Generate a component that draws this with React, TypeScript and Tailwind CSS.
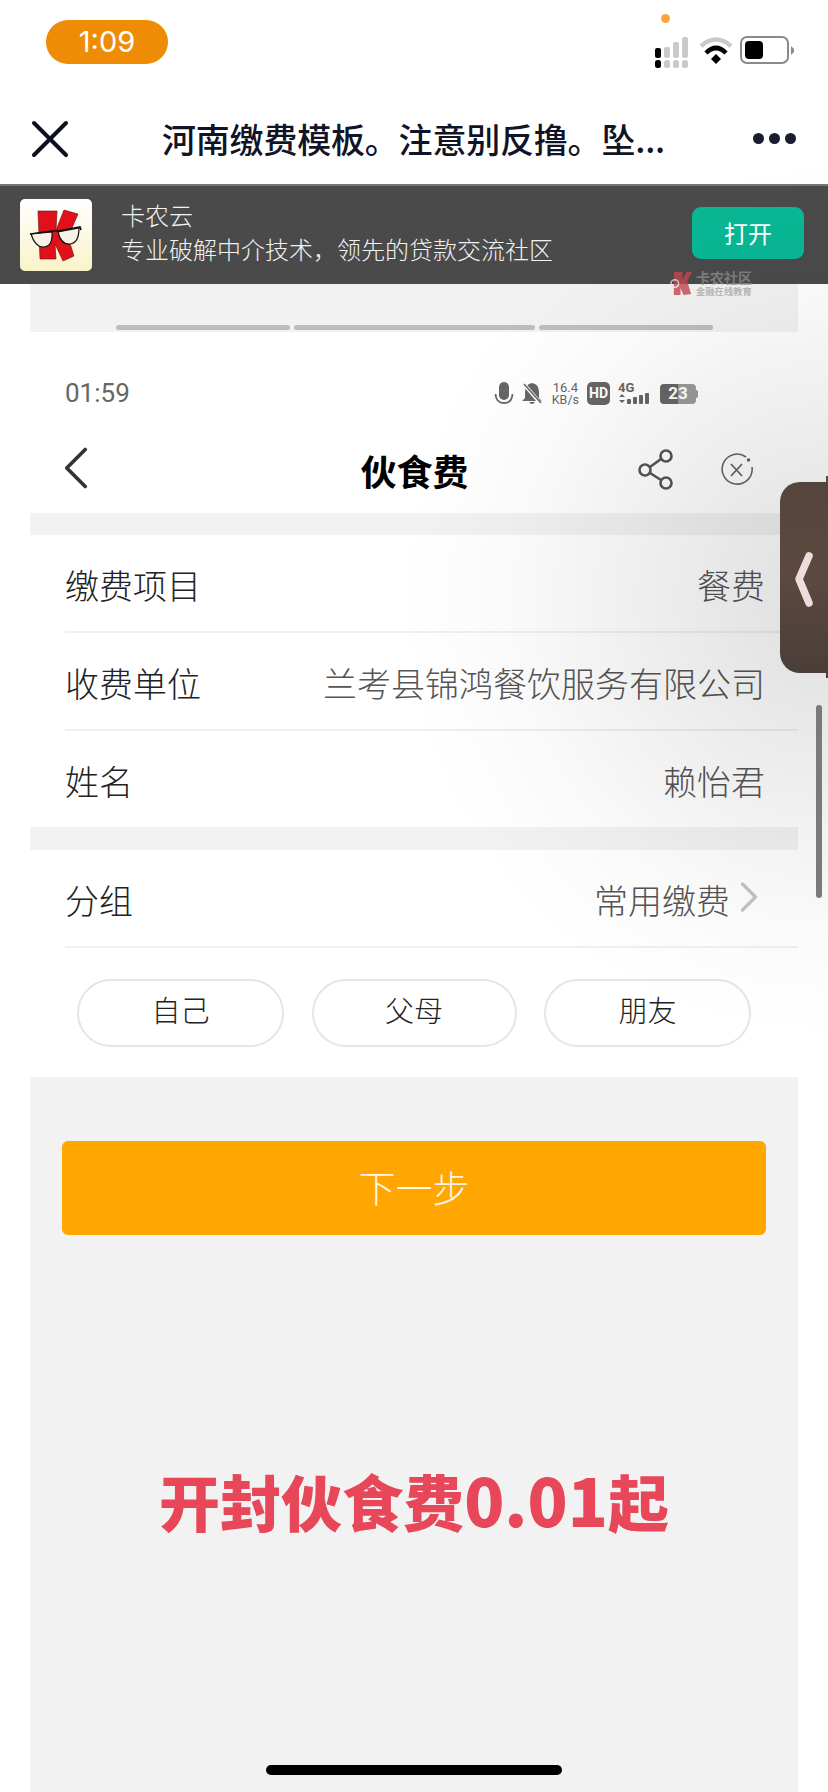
import { ChevronLeft, ChevronRight } from 'lucide-react';

const cjk = { fontFamily: '"Noto Sans CJK SC", "Noto Sans", sans-serif' };

// Outer phone status bar: signal, wifi, battery
function OuterStatusIcons() {
  return (
    <svg width="140" height="36" viewBox="0 0 140 36">
      <rect x="0" y="15" width="6" height="10" rx="2" fill="#000" />
      <rect x="0" y="27" width="6" height="8" rx="2.5" fill="#000" />
      <rect x="9" y="14" width="6" height="11" rx="2" fill="#c9c9c9" />
      <rect x="9" y="27" width="6" height="8" rx="2.5" fill="#c9c9c9" />
      <rect x="18" y="9" width="6" height="16" rx="2" fill="#c9c9c9" />
      <rect x="18" y="27" width="6" height="8" rx="2.5" fill="#c9c9c9" />
      <rect x="27" y="4" width="6" height="21" rx="2" fill="#c9c9c9" />
      <rect x="27" y="27" width="6" height="8" rx="2.5" fill="#c9c9c9" />
      <path d="M46 13 Q61 0 76 13" stroke="#c9c9c9" strokeWidth="4.5" fill="none" />
      <path d="M51 20 Q61 10 71 20" stroke="#000" strokeWidth="4.5" fill="none" />
      <path d="M56 26 L61 21 L66 26 L61 31 Z" fill="#000" />
      <rect x="86" y="4" width="47" height="26" rx="6" fill="none" stroke="#8a8a8a" strokeWidth="2" />
      <rect x="90" y="8" width="18" height="18" rx="4" fill="#000" />
      <path d="M136 13 L139 16 L139 19 L136 22 Z" fill="#8a8a8a" />
    </svg>
  );
}

function AppLogo() {
  return (
    <div className="w-[72px] h-[72px] rounded-[5px] bg-gradient-to-b from-white to-[#faf3c8] shrink-0">
      <svg width="72" height="72" viewBox="0 0 72 72">
        <path d="M18 12 H37 L36 31 L44 11 L58 15 L48 38 L54 57 L43 62 L35 45 L36 60 L20 60 Z" fill="#e2101a" stroke="#6a0a0a" strokeWidth="0.6" />
        <path d="M11 35 L32 33 Q33 48 23 48 Q15 48 11 35 Z" fill="#f8f1e6" stroke="#111" strokeWidth="1.2" />
        <path d="M38 33 L59 29 Q59 44 50 45 Q41 46 38 33 Z" fill="#f8f1e6" stroke="#111" strokeWidth="1.2" />
        <path d="M10 35 L32 32 L38 32 L60 28 L61 31" fill="none" stroke="#111" strokeWidth="1.6" />
      </svg>
    </div>
  );
}

function InnerStatusIcons() {
  return (
    <div className="flex items-center gap-[5px] text-[#666]">
      <svg width="20" height="26" viewBox="0 0 20 26">
        <rect x="5" y="1" width="10" height="18" rx="5" fill="#666" />
        <path d="M1.5 13 Q2 22 10 22 Q18 22 18.5 13" fill="none" stroke="#666" strokeWidth="1.8" />
      </svg>
      <svg width="22" height="26" viewBox="0 0 22 24" className="ml-[2px]">
        <path d="M11 1 Q4 2 4 10 L4 16 L1 19 H21 L18 16 V10 Q18 2 11 1 Z M8 20 Q11 24 14 20 Z" fill="#666" />
        <path d="M2 1 L20 22" stroke="#fff" strokeWidth="3.5" />
        <path d="M3 2 L20 21" stroke="#666" strokeWidth="1.6" />
      </svg>
      <div className="flex flex-col items-center text-[12.5px] leading-[12px] ml-[4px] font-normal" style={{ fontFamily: 'Roboto, sans-serif' }}>
        <span className="text-[13px]">16.4</span>
        <span>KB/s</span>
      </div>
      <div className="w-[23px] h-[23px] rounded-[5px] bg-[#666] flex items-center justify-center text-white text-[14px] font-bold ml-[3px]" style={{ fontFamily: 'Roboto, sans-serif' }}>HD</div>
      <svg width="34" height="26" viewBox="0 0 34 24" className="ml-[3px]">
        <text x="0" y="10" fontSize="13" fontWeight="700" fill="#666" fontFamily="Roboto, sans-serif">4G</text>
        <path d="M1 15 L4 12 L7 15 Z M1 18 L7 18 L4 21 Z" fill="#666" />
        <rect x="9" y="17" width="4" height="5" rx="1" fill="#666" />
        <rect x="15" y="15" width="4" height="7" rx="1" fill="#666" />
        <rect x="21" y="13" width="4" height="9" rx="1" fill="#666" />
        <rect x="27" y="11" width="4" height="11" rx="1" fill="#666" />
      </svg>
      <div className="flex items-center ml-[3px]">
        <div className="w-[36px] h-[20px] rounded-[4px] bg-gradient-to-r from-[#666] from-50% to-[#9a9a9a] to-50% text-white text-[17px] font-bold flex items-center justify-center" style={{ fontFamily: 'Roboto, sans-serif' }}>23</div>
        <div className="w-[2px] h-[8px] bg-[#999] rounded-r-sm" />
      </div>
    </div>
  );
}

function Row({ label, value }: { label: string; value: string }) {
  return (
    <div className="h-[98px] ml-[35px] border-b-2 border-[#f0f0f0] flex items-center justify-between pr-[33px]">
      <span className="text-[34px] font-light text-[#222] mt-[3px]">{label}</span>
      <span className="text-[34px] font-light text-[#555] mt-[3px]">{value}</span>
    </div>
  );
}

function Chip({ label, w }: { label: string; w: string }) {
  return (
    <div className={`${w} h-[68px] rounded-full border-2 border-[#e5e5e5] flex items-center justify-center text-[29px] font-light text-[#222] pb-[6px]`}>
      {label}
    </div>
  );
}

export default function App() {
  return (
    <div className="relative w-[828px] h-[1792px] overflow-hidden bg-white" style={cjk}>
      {/* outer status bar */}
      <div className="h-[92px] relative">
        <div className="absolute left-[46px] top-[20px] w-[122px] h-[44px] rounded-full bg-[#ef8c05] text-white text-[29px] flex items-center justify-center" style={{ fontFamily: 'Inter, sans-serif' }}>
          1:09
        </div>
        <div className="absolute left-[661px] top-[14px] w-[9px] h-[9px] rounded-full bg-[#fca63a]" />
        <div className="absolute left-[655px] top-[33px]">
          <OuterStatusIcons />
        </div>
      </div>

      {/* outer nav */}
      <div className="h-[92px] flex items-center pl-[30px] pr-[30px]">
        <svg width="38" height="38" viewBox="0 0 38 38" className="shrink-0 mt-[1px] mr-[93px] ml-[1px]">
          <path d="M3 3 L35 35 M35 3 L3 35" stroke="#0c1020" strokeWidth="4" strokeLinecap="round" />
        </svg>
        <div className="w-[460px] text-[34px] tracking-[-0.2px] font-medium text-[#101426] whitespace-nowrap mt-[1px]">河南缴费模板。注意别反撸。坠...</div>
        <div className="ml-auto flex gap-[5px] mt-[1px] mr-[2px]">
          <span className="w-[11px] h-[11px] rounded-full bg-[#1a1e30]" />
          <span className="w-[11px] h-[11px] rounded-full bg-[#1a1e30]" />
          <span className="w-[11px] h-[11px] rounded-full bg-[#1a1e30]" />
        </div>
      </div>

      {/* app banner */}
      <div className="h-[100px] bg-[#4a4a4a] flex items-center pl-[20px] pr-[24px] border-t-2 border-[#777]">
        <AppLogo />
        <div className="ml-[29px] text-[#f2f2f2] text-[24px] font-light leading-[34px] -mt-[6px]">
          <div>卡农云</div>
          <div>{'专业破解中介技术\uFF0C领先的贷款交流社区'}</div>
        </div>
        <div className="ml-auto w-[112px] h-[52px] rounded-[9px] bg-[#08b795] text-white text-[24px] flex items-center justify-center -mt-[4px]">打开</div>
      </div>

      {/* watermark */}
      <div className="absolute left-[670px] top-[270px] flex items-center gap-[3px] opacity-80">
        <svg width="23" height="25" viewBox="0 0 24 26">
          <path d="M4 1 H13 V9 L17 1 H23 L18 11 L22 24 L14 25 L11 18 V25 H4 Z" fill="#c2484f" />
          <circle cx="5" cy="13" r="4" fill="none" stroke="#e9e9e9" strokeWidth="1.5" />
        </svg>
        <div className="flex flex-col leading-none">
          <span className="text-[14px] font-bold text-[#8a8a8a] leading-[15px]">卡农社区</span>
          <span className="text-[9.3px] font-bold text-[#aaa] leading-[10px] mt-[1px]">金融在线教育</span>
        </div>
      </div>

      {/* screenshot body */}
      <div className="mx-[30px] w-[768px]">
        <div className="h-[48px] bg-[#f2f2f2] flex items-end justify-center gap-[4px] pb-[2px]">
          <div className="w-[174px] h-[5px] rounded-full bg-[#bdbdbd]" />
          <div className="w-[241px] h-[5px] rounded-full bg-[#bdbdbd]" />
          <div className="w-[174px] h-[5px] rounded-full bg-[#bdbdbd]" />
        </div>

        <div className="h-[181px] bg-white">
          <div className="h-[122px] px-[35px] flex items-center justify-between pt-[1px]">
            <span className="text-[26px] text-[#666]" style={{ fontFamily: 'Roboto, sans-serif' }}>01:59</span>
            <div className="mr-[65px]"><InnerStatusIcons /></div>
          </div>
          <div className="h-[59px] relative flex items-center justify-center">
            <ChevronLeft size={74} strokeWidth={1.2} className="absolute left-[9px] top-[-23px] text-[#333]" />
            <span className="text-[36px] font-bold text-black -mt-[27px] ml-[1px]">伙食费</span>
            <svg width="38" height="42" viewBox="0 0 38 42" className="absolute left-[607px] top-[-5px]">
              <circle cx="29" cy="7" r="5.5" fill="none" stroke="#555" strokeWidth="2.6" />
              <circle cx="8" cy="21" r="5.5" fill="none" stroke="#555" strokeWidth="2.6" />
              <circle cx="29" cy="34" r="5.5" fill="none" stroke="#555" strokeWidth="2.6" />
              <path d="M13 18 L24 10 M13 24 L24 31" stroke="#555" strokeWidth="2.6" />
            </svg>
            <svg width="34" height="34" viewBox="0 0 34 34" className="absolute left-[690px] top-[-1px]">
              <path d="M26 4 A15 15 0 1 0 32 14" fill="none" stroke="#666" strokeWidth="1.6" />
              <circle cx="28.5" cy="7" r="1.8" fill="#666" />
              <path d="M11 11 L22 23 M22 11 L11 23" stroke="#666" strokeWidth="1.8" />
            </svg>
          </div>
        </div>

        <div className="h-[22px] bg-[#f2f2f2]" />

        <Row label="缴费项目" value="餐费" />
        <Row label="收费单位" value="兰考县锦鸿餐饮服务有限公司" />
        <div className="h-[96px] ml-[35px] flex items-center justify-between pr-[33px]">
          <span className="text-[34px] font-light text-[#222] mt-[3px]">姓名</span>
          <span className="text-[34px] font-light text-[#555] mt-[3px]">赖怡君</span>
        </div>

        <div className="h-[23px] bg-[#f2f2f2]" />

        <div className="h-[98px] ml-[35px] border-b-2 border-[#f0f0f0] flex items-center justify-between pr-[35px]">
          <span className="text-[34px] font-light text-[#222] mt-[2px]">分组</span>
          <div className="flex items-center">
            <span className="text-[34px] font-light text-[#555] mt-[2px]">常用缴费</span>
            <ChevronRight size={52} strokeWidth={1.5} className="text-[#c4c4c4] -ml-[7px] -mr-[12px] -mt-[2px]" />
          </div>
        </div>

        <div className="h-[129px] flex items-center justify-between px-[47px] pt-[1px]">
          <Chip label="自己" w="w-[207px]" />
          <Chip label="父母" w="w-[205px]" />
          <Chip label="朋友" w="w-[207px]" />
        </div>

        {/* gray lower part */}
        <div className="h-[716px] bg-[#f2f2f2] pt-[64px] px-[32px]">
          <div className="h-[94px] rounded-[6px] bg-[#ffa600] text-white/90 text-[37px] font-light flex items-center justify-center">下一步</div>
          <div className="mt-[215px] text-center text-[#e8475a] text-[61px] font-black whitespace-nowrap leading-[96px]">
            开封伙食费<span className="text-[66px]">0.01</span>起
          </div>
        </div>
      </div>

      {/* soft shading over the right side */}
      <div className="absolute inset-0 pointer-events-none bg-[radial-gradient(ellipse_430px_440px_at_100%_600px,rgba(0,0,0,0.13),rgba(0,0,0,0.07)_40%,rgba(0,0,0,0.02)_75%,rgba(0,0,0,0))]" />

      {/* floating side tab */}
      <div className="absolute left-[826px] top-[476px] w-[2px] h-[8px] bg-[#5c4a42]" />
      <div className="absolute left-[826px] top-[672px] w-[2px] h-[6px] bg-[#4c3f39]" />
      <div className="absolute left-[780px] top-[482px] w-[48px] h-[191px] rounded-l-[20px] bg-gradient-to-b from-[#56453d] via-[#5c483f] to-[#4a3e39]">
        <svg width="48" height="191" viewBox="0 0 48 191">
          <path d="M29 74 L19 97 L29 121" fill="none" stroke="#ecdcdc" strokeWidth="7.5" strokeLinecap="round" strokeLinejoin="round" />
        </svg>
      </div>

      {/* scrollbar */}
      <div className="absolute left-[816px] top-[705px] w-[6px] h-[193px] rounded-full bg-[#7a7a7a]" />

      {/* home indicator */}
      <div className="absolute left-[266px] top-[1765px] w-[296px] h-[10px] rounded-full bg-black" />
    </div>
  );
}
